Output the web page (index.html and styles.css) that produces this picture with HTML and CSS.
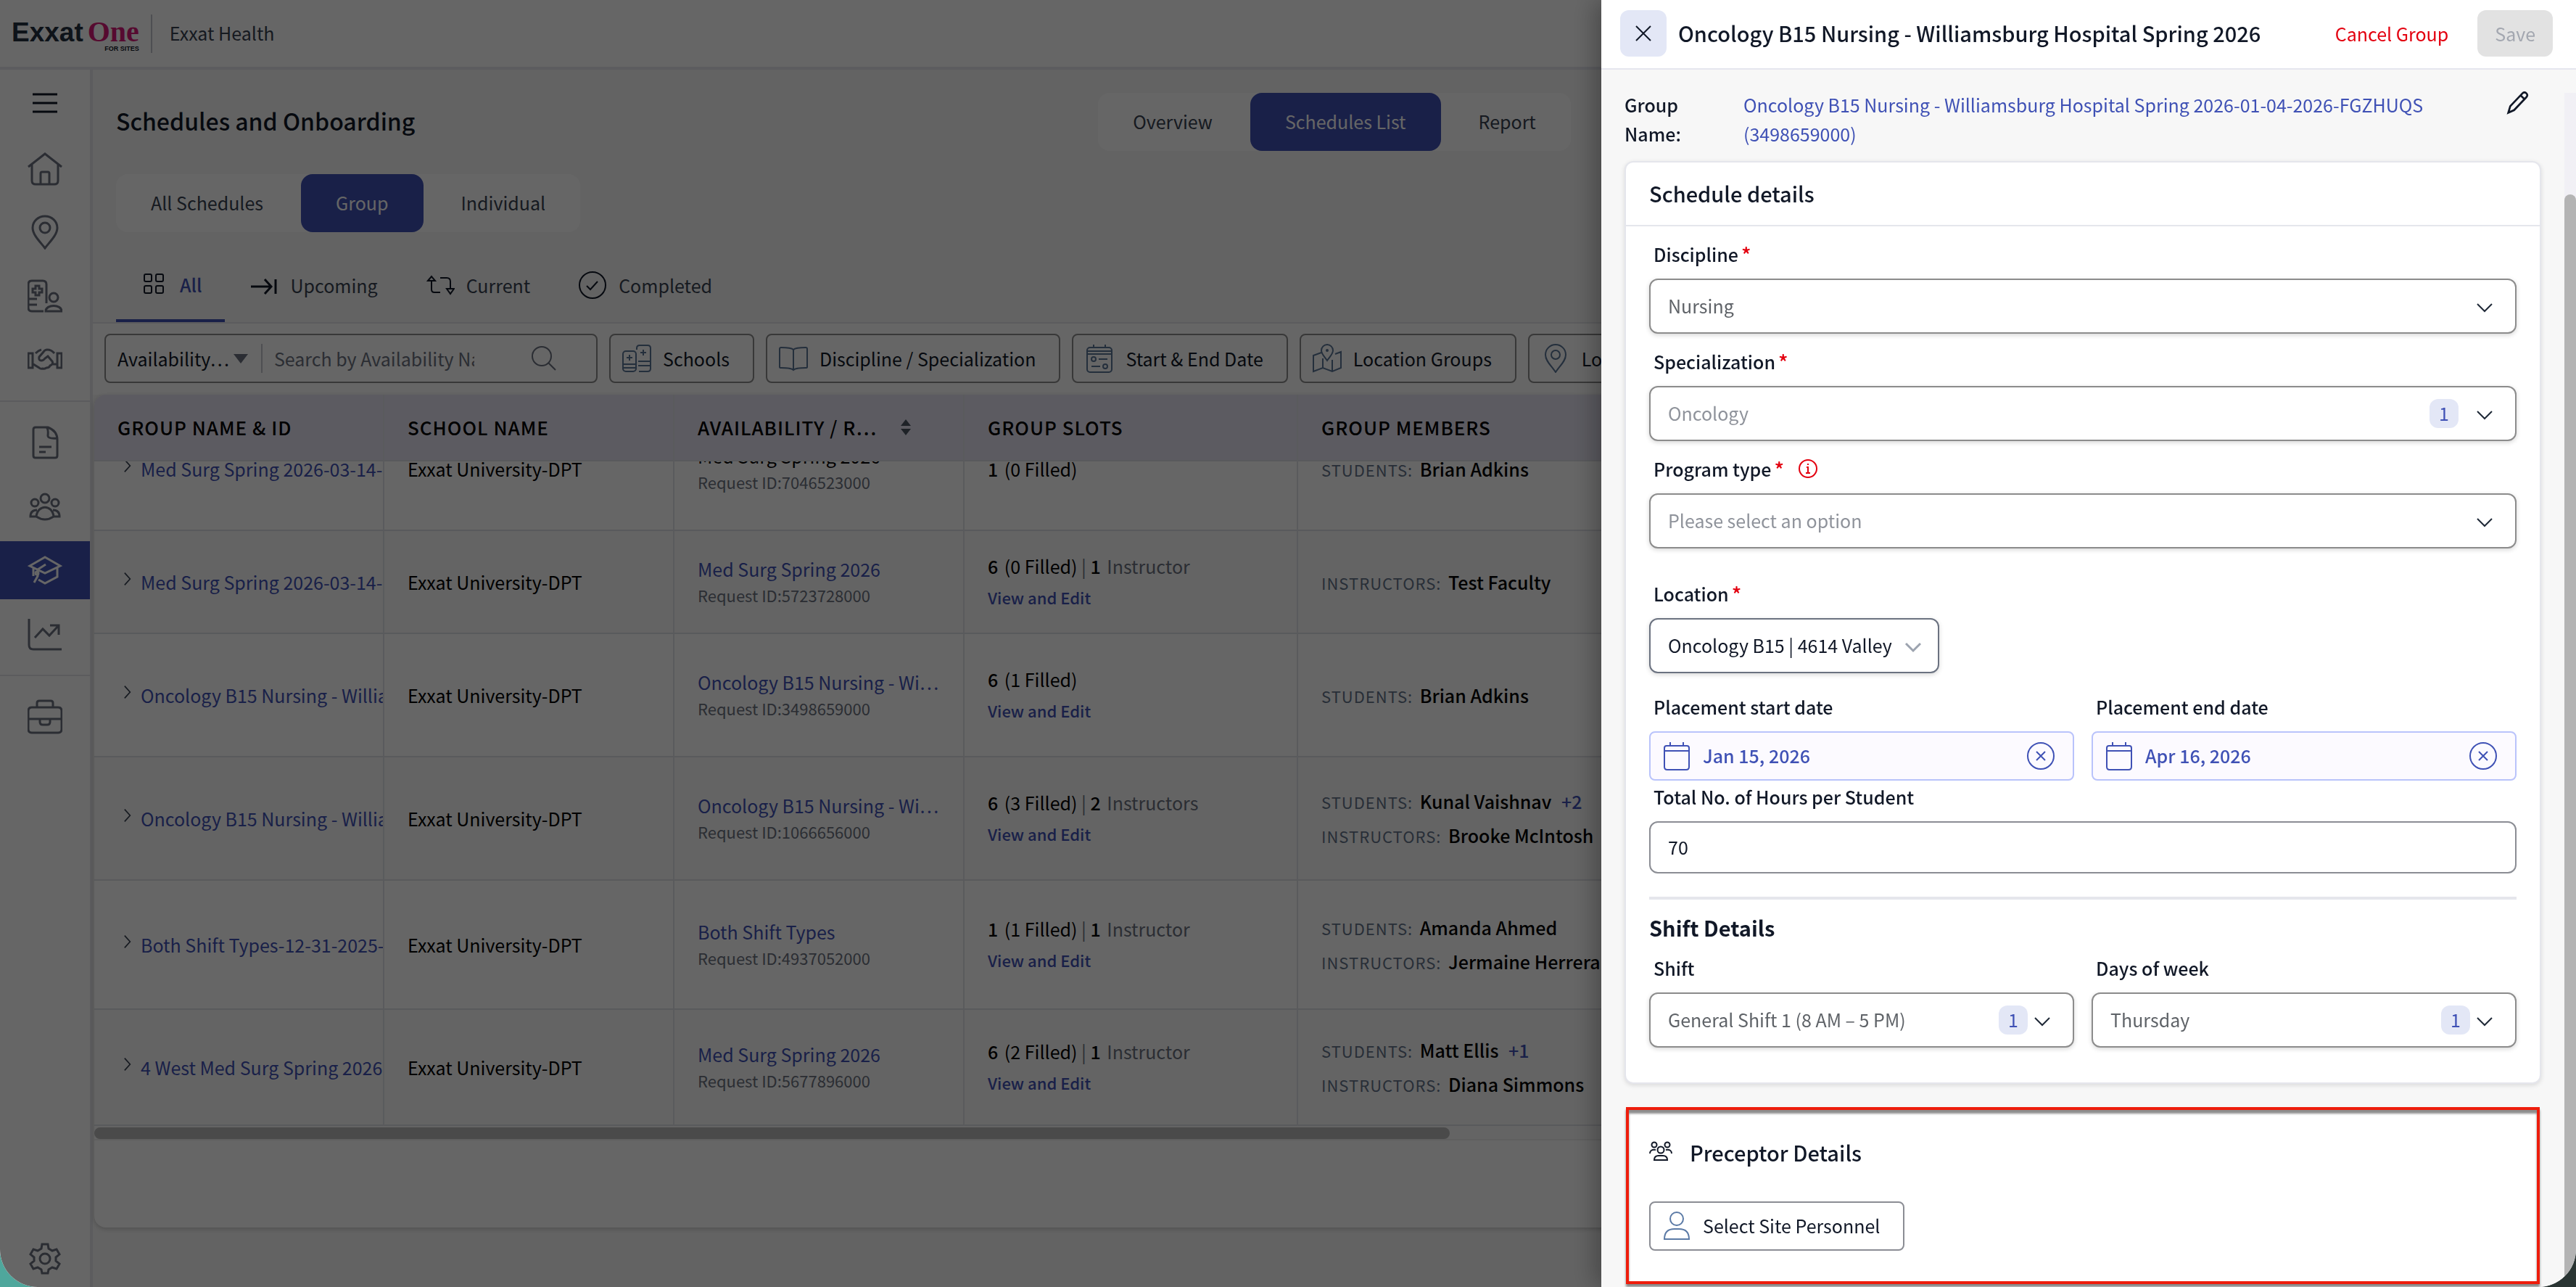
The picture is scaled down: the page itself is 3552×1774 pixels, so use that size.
FILE: index.html
```html
<!DOCTYPE html>
<html lang="en">
<head>
    <meta charset="utf-8">
    <title>Exxat One - Schedules and Onboarding</title>
    <link rel="stylesheet" href="styles.css">
</head>
<body>
    <div class="window">
        <header class="topbar">
            <div class="logo">
                <div class="logo-name"><span class="logo-exxat">Exxat</span><span class="logo-one">One</span></div>
                <div class="logo-sub">FOR SITES</div>
            </div>
            <div class="org">Exxat Health</div>
        </header>

        <div class="layout">
            <nav class="sidebar">
                <button class="menu-button" aria-label="Menu">
                    <svg class="icon" viewBox="0 0 48 48"><path d="M7 12h34M7 24h34M7 36h34" stroke-width="3"/></svg>
                </button>
                <a class="nav-item" href="#" aria-label="Home">
                    <svg class="icon" viewBox="0 0 48 48"><path d="M1 22 24 4l23 18M6 19v22q0 5 5 5h26q5 0 5-5V19M18 46V31q0-2 2-2h8q2 0 2 2v15"/></svg>
                </a>
                <a class="nav-item" href="#" aria-label="Locations">
                    <svg class="icon" viewBox="0 0 48 48"><path d="M24 46C18 38 7 28 7 18a17 16 0 0 1 34 0c0 10-11 20-17 28z"/><circle cx="24" cy="18" r="7"/></svg>
                </a>
                <a class="nav-item" href="#" aria-label="Sites">
                    <svg class="icon" viewBox="0 0 48 48"><path d="M22 45H6q-5 0-5-5V8q0-5 5-5h15q5 0 5 5v26M1 28h12M1 36h12M11 10h5v4h4v5h-4v4h-5v-4H7v-5h4zM25 45c0-10 22-10 22 0z"/><circle cx="36" cy="26" r="6"/></svg>
                </a>
                <a class="nav-item" href="#" aria-label="Partners">
                    <svg class="icon" viewBox="0 0 48 48"><path d="M1 15h6v20H1zM41 15h6v20h-6zM11 15q4-4 8-5M37 15q-4-5-10-5-3 0-5 3l-6 7q-1 5 3 5 3 0 5-3l4-3 6 7q2 4-3 6-1 3-5 3-3 2-5 1-3 1-5-1L8 30M35 30h6"/></svg>
                </a>
                <hr class="nav-divider">
                <a class="nav-item" href="#" aria-label="Documents">
                    <svg class="icon" viewBox="0 0 48 48"><path d="M11 3h17q13 5 13 17v22q0 3-3 3H11q-3 0-3-3V6q0-3 3-3zM26 3q3 2 2 12 1 4 12 3M16 30h17M16 37h9"/></svg>
                </a>
                <a class="nav-item" href="#" aria-label="People">
                    <svg class="icon" viewBox="0 0 48 48"><circle cx="24" cy="13" r="6"/><circle cx="10" cy="19" r="5"/><circle cx="38" cy="19" r="5"/><path d="M12 38c2-17 22-17 24 0q-12 8-24 0zM12 38H4q0-9 9-9M36 38h8q0-9-9-9"/></svg>
                </a>
                <a class="nav-item active" href="#" aria-label="Schedules">
                    <svg class="icon" viewBox="0 0 48 48"><path d="m3 18 21-12 21 12-21 10zM41 21v12l-17 9-9-5M8 21v11M25 16l-11 7v9l-5 9"/><circle cx="13" cy="28" r="2"/></svg>
                </a>
                <a class="nav-item" href="#" aria-label="Reports">
                    <svg class="icon" viewBox="0 0 48 48"><path d="M2 3v36q0 6 6 6h39M10 29l11-12 9 9 13-14M31 12h12v13"/></svg>
                </a>
                <hr class="nav-divider">
                <a class="nav-item" href="#" aria-label="Jobs">
                    <svg class="icon" viewBox="0 0 48 48"><path d="M6 11h36q5 0 5 5v25q0 5-5 5H6q-5 0-5-5V16q0-5 5-5zM13 11V5q0-3 3-3h16q3 0 3 3v6M1 27h46M17 27v4q0 4 4 4h6q4 0 4-4v-4"/></svg>
                </a>
                <a class="nav-item nav-settings" href="#" aria-label="Settings">
                    <svg class="icon" viewBox="0 0 48 48"><path d="M20 5h8l1 6 5 3 6-2 4 7-5 4v5l5 4-4 7-6-2-5 3-1 5h-8l-1-5-5-3-6 2-4-7 5-4v-5l-5-4 4-7 6 2 5-3z"/><circle cx="24" cy="25" r="7"/></svg>
                </a>
            </nav>

            <main class="main">
                <div class="page-head">
                    <h1>Schedules and Onboarding</h1>
                    <div class="switch">
                        <button>Overview</button>
                        <button class="selected">Schedules List</button>
                        <button>Report</button>
                    </div>
                </div>
                <div class="switch sub-switch">
                    <button>All Schedules</button>
                    <button class="selected">Group</button>
                    <button>Individual</button>
                </div>

                <div class="tabs">
                    <button class="tab current">
                        <svg class="icon" viewBox="0 0 40 40"><rect x="7" y="6" width="10" height="10" rx="2"/><rect x="23" y="6" width="10" height="10" rx="2"/><rect x="7" y="22" width="10" height="10" rx="2"/><rect x="23" y="22" width="10" height="10" rx="2"/></svg>
                        All
                    </button>
                    <button class="tab">
                        <svg class="icon" viewBox="0 0 40 40"><path d="M2 22h27M21 12l9 10-9 10M36 12v20" stroke-width="3"/></svg>
                        Upcoming
                    </button>
                    <button class="tab">
                        <svg class="icon" viewBox="0 0 40 40"><path d="M8 14v12q0 4 4 4h8M3 14l5-6 5 6zM20 10h9q5 0 5 5v10M29 25h10l-5 7z"/></svg>
                        Current
                    </button>
                    <button class="tab">
                        <svg class="icon" viewBox="0 0 40 40"><circle cx="20" cy="20" r="18"/><path d="m12 21 5 5 10-11"/></svg>
                        Completed
                    </button>
                </div>

                <div class="filters">
                    <div class="search-box">
                        <button class="search-type">Availability… <span class="caret"></span></button>
                        <input class="search-input" type="text" aria-label="Search" placeholder="Search by Availability Name">
                        <svg class="icon search-icon" viewBox="0 0 40 40"><circle cx="17" cy="17" r="13"/><path d="m26 26 10 10"/></svg>
                    </div>
                    <button class="filter">
                        <svg class="icon" viewBox="0 0 40 40"><rect x="1" y="10" width="18" height="28" rx="4"/><path d="M20 8V6q0-4 4-4h11q4 0 4 4v28q0 4-4 4H23M10 15v8M6 19h8M29 8v8M25 12h8M1 28h18M1 33h18M22 24h17M22 30h17"/></svg>
                        Schools
                    </button>
                    <button class="filter">
                        <svg class="icon" viewBox="0 0 40 40"><path d="M20 8v28M20 8q-3-3-17-3-2 0-2 2v25q0 1 2 1 14 0 17 3 3-3 17-3 2 0 2-1V7q0-2-2-2Q23 5 20 8z"/></svg>
                        Discipline / Specialization
                    </button>
                    <button class="filter">
                        <svg class="icon" viewBox="0 0 40 40"><rect x="3" y="5" width="34" height="34" rx="4"/><path d="M12 1v5M28 1v5M3 10h34M3 14h34M19 21h12M9 31h12"/><circle cx="12" cy="21" r="3"/><circle cx="28" cy="31" r="3"/></svg>
                        Start &amp; End Date
                    </button>
                    <button class="filter">
                        <svg class="icon" viewBox="0 0 40 40"><path d="M12 12 1 16v22l13-5 13 5 12-5V11l-8 3M14 20v13M27 22v16M20 23c-4-6-8-9-8-14a8 8 0 0 1 16 0c0 5-4 8-8 14z"/><circle cx="20" cy="9" r="1"/></svg>
                        Location Groups
                    </button>
                    <button class="filter">
                        <svg class="icon" viewBox="0 0 40 40"><path d="M20 39C15 31 6 24 6 15a14 14 0 0 1 28 0c0 9-9 16-14 24z"/><circle cx="20" cy="15" r="6"/></svg>
                        Locations
                    </button>
                </div>

                <section class="panel">
                    <div class="table-scroll" id="table-scroll">
                        <table>
                            <colgroup><col class="col-name"><col class="col-school"><col class="col-avail"><col class="col-slots"><col></colgroup>
                            <thead>
                                <tr>
                                    <th>GROUP NAME &amp; ID</th>
                                    <th>SCHOOL NAME</th>
                                    <th>
                                        <div class="sortable">
                                            <span>AVAILABILITY / R…</span>
                                            <svg class="sort" viewBox="0 0 16 24"><path d="M8 1l7 9H1zM8 23l7-9H1z"/></svg>
                                        </div>
                                    </th>
                                    <th>GROUP SLOTS</th>
                                    <th>GROUP MEMBERS</th>
                                </tr>
                            </thead>
                            <tbody>
                                <tr class="row-l">
                                    <td><div class="name"><svg class="chev" viewBox="0 0 14 24"><path d="m2 2 9 10-9 10"/></svg><a href="#">Med Surg Spring 2026-03-14-</a></div></td>
                                    <td>Exxat University-DPT</td>
                                    <td><span class="avail">Med Surg Spring 2026</span><span class="req">Request ID:7046523000</span></td>
                                    <td><div class="slots"><b>1</b> (0 Filled)</div></td>
                                    <td><div class="member"><span>STUDENTS:</span> Brian Adkins</div></td>
                                </tr>
                                <tr class="row-s">
                                    <td><div class="name"><svg class="chev" viewBox="0 0 14 24"><path d="m2 2 9 10-9 10"/></svg><a href="#">Med Surg Spring 2026-03-14-</a></div></td>
                                    <td>Exxat University-DPT</td>
                                    <td><a class="avail" href="#">Med Surg Spring 2026</a><span class="req">Request ID:5723728000</span></td>
                                    <td><div class="slots"><b>6</b> (0 Filled) <i>|</i> <b>1</b> <i>Instructor</i></div><a class="edit" href="#">View and Edit</a></td>
                                    <td><div class="member"><span>INSTRUCTORS:</span> Test Faculty</div></td>
                                </tr>
                                <tr class="row-l">
                                    <td><div class="name"><svg class="chev" viewBox="0 0 14 24"><path d="m2 2 9 10-9 10"/></svg><a href="#">Oncology B15 Nursing - Willia</a></div></td>
                                    <td>Exxat University-DPT</td>
                                    <td><a class="avail" href="#">Oncology B15 Nursing - Wi…</a><span class="req">Request ID:3498659000</span></td>
                                    <td><div class="slots"><b>6</b> (1 Filled)</div><a class="edit" href="#">View and Edit</a></td>
                                    <td><div class="member"><span>STUDENTS:</span> Brian Adkins</div></td>
                                </tr>
                                <tr class="row-l">
                                    <td><div class="name"><svg class="chev" viewBox="0 0 14 24"><path d="m2 2 9 10-9 10"/></svg><a href="#">Oncology B15 Nursing - Willia</a></div></td>
                                    <td>Exxat University-DPT</td>
                                    <td><a class="avail" href="#">Oncology B15 Nursing - Wi…</a><span class="req">Request ID:1066656000</span></td>
                                    <td><div class="slots"><b>6</b> (3 Filled) <i>|</i> <b>2</b> <i>Instructors</i></div><a class="edit" href="#">View and Edit</a></td>
                                    <td><div class="member"><span>STUDENTS:</span> Kunal Vaishnav <a href="#">+2</a></div><div class="member"><span>INSTRUCTORS:</span> Brooke McIntosh</div></td>
                                </tr>
                                <tr class="row-xl">
                                    <td><div class="name"><svg class="chev" viewBox="0 0 14 24"><path d="m2 2 9 10-9 10"/></svg><a href="#">Both Shift Types-12-31-2025-</a></div></td>
                                    <td>Exxat University-DPT</td>
                                    <td><a class="avail" href="#">Both Shift Types</a><span class="req">Request ID:4937052000</span></td>
                                    <td><div class="slots"><b>1</b> (1 Filled) <i>|</i> <b>1</b> <i>Instructor</i></div><a class="edit" href="#">View and Edit</a></td>
                                    <td><div class="member"><span>STUDENTS:</span> Amanda Ahmed</div><div class="member"><span>INSTRUCTORS:</span> Jermaine Herrera</div></td>
                                </tr>
                                <tr class="row-m">
                                    <td><div class="name"><svg class="chev" viewBox="0 0 14 24"><path d="m2 2 9 10-9 10"/></svg><a href="#">4 West Med Surg Spring 2026</a></div></td>
                                    <td>Exxat University-DPT</td>
                                    <td><a class="avail" href="#">Med Surg Spring 2026</a><span class="req">Request ID:5677896000</span></td>
                                    <td><div class="slots"><b>6</b> (2 Filled) <i>|</i> <b>1</b> <i>Instructor</i></div><a class="edit" href="#">View and Edit</a></td>
                                    <td><div class="member"><span>STUDENTS:</span> Matt Ellis <a href="#">+1</a></div><div class="member"><span>INSTRUCTORS:</span> Diana Simmons</div></td>
                                </tr>
                            </tbody>
                        </table>
                    </div>
                    <div class="hscroll"><div class="hscroll-thumb"></div></div>
                    <div class="panel-foot"></div>
                </section>
            </main>
        </div>

        <div class="backdrop"></div>

        <aside class="drawer">
            <header class="drawer-head">
                <button class="close" aria-label="Close">
                    <svg class="icon" viewBox="0 0 32 32"><path d="m6 6 20 20M26 6 6 26"/></svg>
                </button>
                <h2>Oncology B15 Nursing - Williamsburg Hospital Spring 2026</h2>
                <button class="cancel">Cancel Group</button>
                <button class="save" disabled>Save</button>
            </header>
            <div class="drawer-body">
                <form class="drawer-content">
                    <div class="group-name">
                        <span class="group-label">Group Name:</span>
                        <a href="#">Oncology B15 Nursing - Williamsburg Hospital Spring 2026-01-04-2026-FGZHUQS (3498659000)</a>
                        <button type="button" class="pencil" aria-label="Edit name">
                            <svg class="icon" viewBox="0 0 36 36"><path d="m3 33 3-10L25 3q3-3 6 0t0 6L12 29zM22 6l7 7"/></svg>
                        </button>
                    </div>

                    <section class="card">
                        <h3 class="card-title">Schedule details</h3>
                        <div class="card-body">
                            <label class="label" for="discipline">Discipline<sup>*</sup></label>
                            <div class="select">
                                <select id="discipline"><option>Nursing</option></select>
                                <svg class="down" viewBox="0 0 24 16"><path d="m2 3 10 10L22 3"/></svg>
                            </div>

                            <label class="label" for="specialization">Specialization<sup>*</sup></label>
                            <div class="select muted">
                                <select id="specialization"><option>Oncology</option></select>
                                <span class="badge badge-wide">1</span>
                                <svg class="down" viewBox="0 0 24 16"><path d="m2 3 10 10L22 3"/></svg>
                            </div>

                            <label class="label" for="program">Program type<sup>*</sup>
                                <svg class="info" viewBox="0 0 26 26"><circle cx="13" cy="13" r="12"/><path d="M11 11h2v8M10 19h6M13 6v2"/></svg>
                            </label>
                            <div class="select muted select-program">
                                <select id="program"><option>Please select an option</option></select>
                                <svg class="down" viewBox="0 0 24 16"><path d="m2 3 10 10L22 3"/></svg>
                            </div>

                            <label class="label" for="location">Location<sup>*</sup></label>
                            <div class="select location">
                                <select id="location"><option>Oncology B15 | 4614 Valley Road</option></select>
                                <svg class="down" viewBox="0 0 24 16"><path d="m2 3 10 10L22 3"/></svg>
                            </div>

                            <div class="pair dates">
                                <div>
                                    <label class="label" for="start">Placement start date</label>
                                    <div class="date">
                                        <svg class="icon" viewBox="0 0 40 40"><path d="M6 6h28q3 0 3 3v26q0 4-4 4H7q-4 0-4-4V9q0-3 3-3zM3 13h34M11 1v5M29 1v5"/></svg>
                                        <input id="start" type="text" value="Jan 15, 2026">
                                        <button type="button" aria-label="Clear start date"><svg class="icon" viewBox="0 0 40 40"><circle cx="20" cy="20" r="18"/><path d="m14 14 12 12M26 14 14 26"/></svg></button>
                                    </div>
                                </div>
                                <div>
                                    <label class="label" for="end">Placement end date</label>
                                    <div class="date">
                                        <svg class="icon" viewBox="0 0 40 40"><path d="M6 6h28q3 0 3 3v26q0 4-4 4H7q-4 0-4-4V9q0-3 3-3zM3 13h34M11 1v5M29 1v5"/></svg>
                                        <input id="end" type="text" value="Apr 16, 2026">
                                        <button type="button" aria-label="Clear end date"><svg class="icon" viewBox="0 0 40 40"><circle cx="20" cy="20" r="18"/><path d="m14 14 12 12M26 14 14 26"/></svg></button>
                                    </div>
                                </div>
                            </div>

                            <label class="label" for="hours">Total No. of Hours per Student</label>
                            <input class="text-input" id="hours" type="text" value="70">

                            <hr class="divider">

                            <h3 class="shift-title">Shift Details</h3>
                            <div class="pair">
                                <div>
                                    <label class="label" for="shift">Shift</label>
                                    <div class="select">
                                        <select id="shift"><option>General Shift 1 (8 AM – 5 PM)</option></select>
                                        <span class="badge">1</span>
                                        <svg class="down" viewBox="0 0 24 16"><path d="m2 3 10 10L22 3"/></svg>
                                    </div>
                                </div>
                                <div>
                                    <label class="label" for="days">Days of week</label>
                                    <div class="select">
                                        <select id="days"><option>Thursday</option></select>
                                        <span class="badge">1</span>
                                        <svg class="down" viewBox="0 0 24 16"><path d="m2 3 10 10L22 3"/></svg>
                                    </div>
                                </div>
                            </div>
                        </div>
                    </section>

                    <section class="preceptor">
                        <h3>
                            <svg class="icon" viewBox="0 0 32 32"><circle cx="7" cy="6" r="3.5"/><circle cx="25" cy="6" r="3.5"/><circle cx="16" cy="13" r="4.5"/><path d="M7 27q0-6 6-6h6q6 0 6 6zM1 18q0-6 8-5M31 18q0-6-8-5"/></svg>
                            Preceptor Details
                        </h3>
                        <button type="button" class="select-person">
                            <svg class="icon" viewBox="0 0 40 40"><circle cx="20" cy="11" r="9"/><path d="M3 39q0-14 14-14h6q14 0 14 14z"/></svg>
                            Select Site Personnel
                        </button>
                    </section>
                </form>
                <div class="vscroll"><div class="vscroll-thumb"></div></div>
            </div>
        </aside>
    </div>

    <script>
        // open the list scrolled down to the last rows
        const list = document.getElementById("table-scroll");
        list.scrollTop = list.scrollHeight;
    </script>
</body>
</html>
```
FILE: styles.css
```css
* {
    box-sizing: border-box;
}

body {
    margin: 0;
    background: linear-gradient(90deg, #4fa79c 0%, #4fa79c 50%, #2a3533 50%);
    font-family: "Noto Sans CJK SC", "Open Sans", sans-serif;
    font-size: 25px;
    line-height: 40px;
    color: #111827;
}

button,
input,
select {
    font: inherit;
    color: inherit;
    margin: 0;
}

button {
    border: none;
    background: none;
    padding: 0;
    cursor: pointer;
}

a {
    color: #3f51b5;
    text-decoration: none;
}

h1,
h2,
h3 {
    margin: 0;
    font-weight: 500;
}

.icon {
    width: 40px;
    height: 40px;
    flex: none;
    fill: none;
    stroke: currentColor;
    stroke-width: 2;
}

.window {
    position: relative;
    height: 100vh;
    display: flex;
    flex-direction: column;
    overflow: hidden;
    border-radius: 0 0 52px 52px;
    background: #f7f7f7;
}

/* top bar */
.topbar {
    display: flex;
    align-items: center;
    height: 96px;
    flex: none;
    padding: 0 16px;
    background: #fff;
    border-bottom: 4px solid #e5e6ee;
}

.logo {
    padding-top: 8px;
    padding-right: 16px;
    border-right: 2px solid #c4c6cc;
}

.logo-name {
    display: flex;
    align-items: baseline;
    gap: 6px;
    line-height: 32px;
    font-weight: bold;
}

.logo-exxat {
    font-family: "Liberation Sans", sans-serif;
    font-size: 37px;
    color: #24303f;
}

.logo-one {
    font-family: "Liberation Serif", serif;
    font-size: 40px;
    color: #d81b78;
}

.logo-sub {
    font-family: "Liberation Sans", sans-serif;
    font-size: 9px;
    line-height: 12px;
    font-weight: bold;
    text-align: right;
}

.org {
    padding: 0 0 2px 24px;
    color: #374151;
}

.layout {
    flex: 1;
    min-height: 0;
    display: flex;
}

/* sidebar */
.sidebar {
    width: 128px;
    flex: none;
    display: flex;
    flex-direction: column;
    background: #fff;
    border-right: 4px solid #e5e6ea;
    color: #6b7280;
}

.sidebar .icon {
    width: 48px;
    height: 48px;
    stroke-width: 3;
}

.menu-button {
    display: flex;
    align-items: center;
    justify-content: center;
    height: 92px;
    margin-bottom: 4px;
    color: #111827;
}

.nav-item {
    height: 80px;
    margin-bottom: 8px;
    display: flex;
    align-items: center;
    justify-content: center;
    color: inherit;
}

.nav-item.active {
    background: #3f51b5;
    color: #fff;
}

.nav-divider {
    width: 100%;
    height: 2px;
    margin: 8px 0 16px;
    border: none;
    background: #e5e6ea;
}

.nav-settings {
    margin-top: auto;
    margin-bottom: 0;
}

/* main */
.main {
    flex: 1;
    min-width: 0;
    display: flex;
    flex-direction: column;
    padding-bottom: 82px;
}

.page-head {
    display: grid;
    grid-template-columns: 1fr auto 1fr;
    align-items: center;
    padding: 32px 32px 0;
}

.page-head h1 {
    padding-bottom: 4px;
    font-size: 32px;
}

.switch {
    display: flex;
    gap: 4px;
    border-radius: 16px;
    background: #fff;
}

.switch button {
    height: 80px;
    padding: 0 48px 2px;
    border-radius: 16px;
    color: #374151;
}

.switch .selected {
    background: #3f51b5;
    color: #fff;
}

.sub-switch {
    align-self: flex-start;
    margin: 32px 32px 0;
}

.tabs {
    display: flex;
    gap: 2px;
    margin-top: 32px;
    padding: 0 32px;
    border-bottom: 2px solid #e5e6ea;
}

.tab {
    display: flex;
    align-items: center;
    gap: 16px;
    height: 92px;
    padding: 0 32px 6px;
    border-bottom: 4px solid transparent;
    color: #374151;
}

.tab .icon {
    color: #111827;
}

.tab.current {
    padding-bottom: 8px;
    color: #3f51b5;
    border-color: #3f51b5;
    font-weight: 500;
}

.filters {
    display: flex;
    gap: 16px;
    padding: 14px 16px 16px;
    background: #fff;
    overflow: hidden;
}

.search-box,
.filter {
    display: flex;
    align-items: center;
    height: 68px;
    flex: none;
    border: 2px solid #8c8c8c;
    border-radius: 8px;
}

.search-box {
    width: 680px;
    padding-left: 16px;
}

.search-type {
    display: flex;
    align-items: center;
    gap: 6px;
    padding-right: 18px;
    border-right: 2px solid #c4c6cc;
}

.caret {
    border: 10px solid transparent;
    border-top: 13px solid #6b7280;
    border-bottom: none;
}

.search-input {
    width: 292px;
    padding: 0 0 0 16px;
    border: none;
    background: none;
    outline: none;
}

.search-input::placeholder {
    color: #6b7280;
}

.search-icon {
    margin-left: 76px;
    color: #6b7280;
}

.filter {
    gap: 16px;
    padding: 0 32px 0 16px;
}

.filter .icon {
    color: #5b7596;
}

/* table */
.panel {
    flex: 1;
    min-height: 0;
    display: flex;
    flex-direction: column;
    overflow: hidden;
    margin-left: 2px;
    border-radius: 16px;
    background: #fff;
    box-shadow: 0 2px 6px rgba(0, 0, 0, 0.2);
}

.table-scroll {
    flex: 1;
    min-height: 0;
    overflow: hidden;
}

table {
    width: 100%;
    table-layout: fixed;
    border-collapse: separate;
    border-spacing: 0;
    color: #000;
}

.col-name,
.col-school,
.col-avail {
    width: 400px;
}

.col-slots {
    width: 460px;
}

th,
td {
    padding: 0 32px;
    text-align: left;
    border-right: 2px solid #e2e3e8;
    border-bottom: 2px solid #dfe0e6;
    white-space: nowrap;
    overflow: hidden;
}

th {
    position: sticky;
    top: 0;
    z-index: 1;
    height: 92px;
    background: #e6e4f2;
    font-size: 26px;
    font-weight: 500;
    letter-spacing: 1px;
}

tbody tr:nth-child(even) {
    background: #fafafa;
}

td:first-child {
    padding-right: 0;
}

.row-s {
    height: 142px;
}

.row-m {
    height: 160px;
}

.row-l {
    height: 170px;
}

.row-xl {
    height: 178px;
}

.sortable {
    display: flex;
    align-items: center;
    gap: 32px;
}

.sort {
    width: 16px;
    height: 24px;
    fill: #4b5563;
}

.name {
    display: flex;
    align-items: center;
    gap: 12px;
    padding-left: 8px;
}

.chev {
    width: 12px;
    height: 20px;
    flex: none;
    margin-bottom: 8px;
    fill: none;
    stroke: #374151;
    stroke-width: 2;
}

.avail,
.req,
.edit {
    display: block;
    line-height: 36px;
}

.req {
    font-size: 22px;
    color: #6b7280;
}

.edit {
    font-size: 22px;
    line-height: 44px;
    font-weight: 500;
}

.slots {
    line-height: 42px;
}

.slots i {
    font-style: normal;
    color: #6b7280;
}

.slots b {
    margin-right: 3px;
    font-weight: 500;
}

.member {
    line-height: 46px;
    font-weight: 500;
}

.member span {
    margin-right: 4px;
    font-size: 22px;
    font-weight: 400;
    letter-spacing: 1px;
    color: #64748b;
}

.member a {
    margin-left: 8px;
}

.hscroll {
    height: 20px;
    padding: 2px 0;
    background: #fafafa;
    border-bottom: 2px solid #ededed;
}

.hscroll-thumb {
    width: 1869px;
    height: 16px;
    border-radius: 8px;
    background: #b9b9b9;
}

.panel-foot {
    height: 120px;
}

.backdrop {
    position: absolute;
    inset: 0;
    z-index: 2;
    background: rgba(0, 0, 0, 0.6);
}

/* drawer */
.drawer {
    position: absolute;
    top: 0;
    right: 0;
    bottom: 0;
    z-index: 3;
    width: 1344px;
    max-width: 100%;
    display: flex;
    flex-direction: column;
    background: #f7f7f7;
    box-shadow: -8px 0 32px rgba(0, 0, 0, 0.3);
}

.drawer-head {
    display: flex;
    align-items: center;
    height: 96px;
    flex: none;
    padding: 0 32px 2px 26px;
    background: #fff;
    border-bottom: 2px solid #e5e6ee;
}

.drawer-head h2 {
    flex: 1;
    padding: 0 0 2px 16px;
    font-size: 29px;
}

.close {
    width: 64px;
    height: 64px;
    border-radius: 12px;
    background: #e3e7f6;
}

.close .icon {
    display: block;
    width: 32px;
    height: 32px;
    margin: auto;
}

.cancel {
    color: #e3000f;
}

.save {
    height: 64px;
    margin-left: 40px;
    padding: 0 24px;
    border-radius: 12px;
    background: #e2e2e2;
    color: #a3a7b0;
}

.drawer-body {
    flex: 1;
    min-height: 0;
    display: flex;
    overflow: hidden;
}

.drawer-content {
    flex: 1;
    min-width: 0;
    padding: 28px 32px 0;
}

.group-name {
    display: flex;
    margin-bottom: 18px;
}

.group-label {
    width: 96px;
    margin-right: 68px;
    font-weight: 500;
}

.group-name a {
    flex: 1;
    padding-right: 96px;
}

.pencil {
    width: 36px;
    height: 36px;
    margin-right: 12px;
}

.pencil .icon {
    display: block;
    width: 32px;
    height: 32px;
    stroke-width: 3;
}

.card {
    border: 2px solid #e5e6ec;
    border-radius: 12px;
    background: #fff;
    box-shadow: 0 2px 6px rgba(0, 0, 0, 0.12);
}

.card-title {
    padding: 0 32px 2px;
    font-size: 29px;
    line-height: 84px;
    border-bottom: 2px solid #e5e6ec;
}

.card-body {
    padding: 20px 32px 48px;
}

.label {
    display: flex;
    align-items: center;
    height: 40px;
    margin-bottom: 12px;
    padding: 0 0 4px 6px;
    font-weight: 500;
}

.label sup {
    margin-left: 4px;
    font-size: 28px;
    line-height: 36px;
    color: #e3000f;
}

.info {
    width: 26px;
    height: 26px;
    margin-left: 20px;
    fill: none;
    stroke: #e3000f;
    stroke-width: 2;
}

.select {
    position: relative;
    margin-bottom: 20px;
}

.select select {
    display: block;
    width: 100%;
    height: 76px;
    padding: 0 88px 2px 24px;
    border: 2px solid #8c8c8c;
    border-radius: 12px;
    background: #fff;
    box-shadow: 0 2px 6px rgba(0, 0, 0, 0.16);
    color: #5f6368;
    appearance: none;
}

.select.muted select {
    color: #8f939b;
}

.select.select-program {
    margin-bottom: 44px;
}

.select.location {
    width: 400px;
    margin-bottom: 28px;
}

.select.location select {
    padding-right: 56px;
    border-color: #6b7280;
    color: #111827;
}

.down {
    position: absolute;
    top: 32px;
    right: 32px;
    width: 24px;
    height: 16px;
    fill: none;
    stroke: #1f2937;
    stroke-width: 2;
    pointer-events: none;
}

.location .down {
    right: 24px;
    stroke: #9ca3af;
    stroke-width: 3;
}

.badge {
    position: absolute;
    top: 18px;
    right: 64px;
    width: 40px;
    height: 40px;
    border-radius: 12px;
    background: #e3e7f6;
    color: #3f51b5;
    line-height: 38px;
    text-align: center;
}

.badge-wide {
    right: 80px;
}

.pair {
    display: grid;
    grid-template-columns: 1fr 1fr;
    gap: 24px;
}

.pair .select {
    margin-bottom: 0;
}

.dates {
    margin-bottom: 4px;
}

.date {
    display: flex;
    align-items: center;
    height: 68px;
    padding: 0 24px 0 16px;
    border: 2px solid #b9c3fb;
    border-radius: 8px;
    background: #fcfaff;
    color: #3f51b5;
}

.date input {
    flex: 1;
    min-width: 0;
    padding: 0 16px 2px;
    border: none;
    background: none;
    font-weight: 500;
}

.date button .icon {
    display: block;
}

.text-input {
    display: block;
    width: 100%;
    height: 72px;
    padding: 0 24px 2px;
    border: 2px solid #8b8d94;
    border-radius: 12px;
}

.divider {
    height: 4px;
    margin: 32px 0 14px;
    border: none;
    background: #e5e6ec;
}

.shift-title {
    margin-bottom: 14px;
    font-size: 29px;
    line-height: 48px;
    font-weight: 700;
}

.preceptor {
    margin: 32px 2px 0;
    padding: 34px 28px 42px;
    border: 4px solid #ee1d0c;
    background: #fff;
    box-shadow: 0 4px 3px rgba(0, 0, 0, 0.45), inset 0 5px 3px rgba(0, 0, 0, 0.45);
}

.preceptor h3 {
    display: flex;
    align-items: center;
    gap: 24px;
    margin-bottom: 44px;
    font-size: 29px;
    line-height: 48px;
}

.preceptor h3 .icon {
    width: 32px;
    height: 32px;
}

.select-person {
    display: flex;
    align-items: center;
    gap: 16px;
    height: 68px;
    padding: 0 32px 2px 16px;
    border: 2px solid #8b8d94;
    border-radius: 8px;
}

.select-person .icon {
    color: #5b7aa6;
}

.vscroll {
    width: 16px;
    margin-top: 32px;
    padding-top: 140px;
    background: #f1f0f5;
}

.vscroll-thumb {
    height: 100%;
    border-radius: 8px 8px 0 0;
    background: #b4b4b4;
}
```
